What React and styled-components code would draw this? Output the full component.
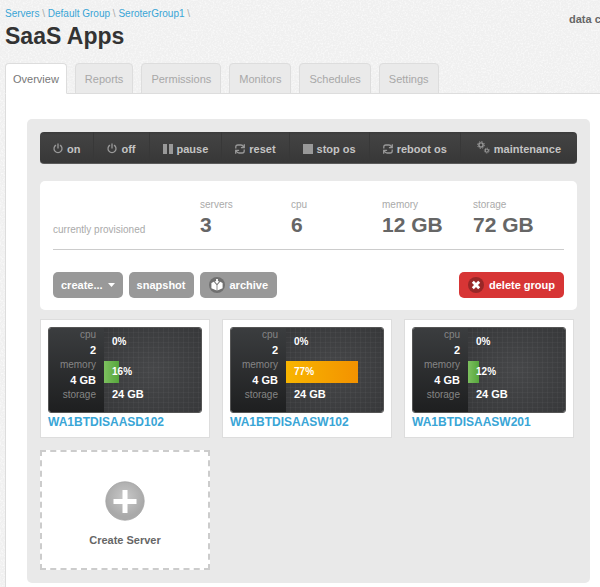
import React from "react";
import styled, { createGlobalStyle } from "styled-components";

const paper = encodeURIComponent(
  '<svg xmlns="http://www.w3.org/2000/svg" width="200" height="200"><filter id="n"><feTurbulence type="fractalNoise" baseFrequency="0.6" numOctaves="2" stitchTiles="stitch"/><feColorMatrix values="0 0 0 0 1  0 0 0 0 1  0 0 0 0 1  1.6 0 0 0 -0.7"/></filter><rect width="200" height="200" filter="url(#n)"/></svg>'
);

const GlobalStyle = createGlobalStyle`
  * { box-sizing: border-box; }
  body {
    margin: 0;
    color: #666;
    background: #f0f0f0 url("data:image/svg+xml,${paper}");
    font-family: "Liberation Sans", Arial, sans-serif;
    font-size: 11px;
  }
  button { font-family: inherit; cursor: pointer; }
  a { color: #39a5d6; text-decoration: none; }
  h1, h2, p, ul, dl, dd { margin: 0; padding: 0; }
`;

const Page = styled.div`
  display: flex;
  flex-direction: column;
  min-height: 100vh;
  padding-left: 5px;
  overflow-x: hidden;
`;

const Header = styled.header`
  display: flex;
  justify-content: space-between;
  align-items: flex-start;
  height: 63px;
  padding-top: 7px;
`;

const Breadcrumb = styled.nav`
  font-size: 10px;
  line-height: 14px;
  color: #aaa;
`;

const Title = styled.h1`
  margin-top: 2px;
  font-size: 23px;
  line-height: 26px;
  color: #333;
`;

const DataCenter = styled.p`
  width: 31px;
  margin-top: 5px;
  overflow: hidden;
  white-space: nowrap;
  font-weight: bold;
  font-size: 11px;
  line-height: 14px;
`;

const Tabs = styled.nav`
  display: flex;
  gap: 8px;
  border-bottom: 1px solid #ddd;
`;

const Tab = styled.a`
  height: 31px;
  margin-bottom: -1px;
  padding: 0 ${(p) => (p.$active ? "7px" : "9px")};
  border: 1px solid #ddd;
  border-bottom-color: ${(p) => (p.$active ? "#fff" : "#ddd")};
  border-radius: 4px 4px 0 0;
  background: ${(p) => (p.$active ? "#fff" : "#eaeaea")};
  color: ${(p) => (p.$active ? "#777" : "#a8a8a8")};
  font-size: 11px;
  line-height: 30px;
`;

const Content = styled.main`
  flex: 1;
  padding: 25px 10px 5px 21px;
  border-left: 1px solid #ddd;
  background: #fff;
`;

const Panel = styled.section`
  padding: 13px;
  border-radius: 5px;
  background: #e9e9e9;
`;

const Toolbar = styled.div`
  display: flex;
  height: 32px;
  border-radius: 4px;
  border-bottom: 1px solid #5a5a5a;
  overflow: hidden;
  background: linear-gradient(#3b3b3b, #434343 10%, #373737);
`;

const Tool = styled.button`
  display: flex;
  flex: 0 1 auto;
  align-items: center;
  justify-content: center;
  gap: 4px;
  padding: 2px 13px 0;
  border: 0;
  border-right: 1px solid #383838;
  background: none;
  color: #c4c4c4;
  font-size: 11px;
  font-weight: bold;
  white-space: nowrap;
  &:last-child { flex-grow: 1; border-right: 0; }
  svg { color: #999; }
`;

const Summary = styled.section`
  margin-top: 17px;
  padding: 17px 13px 12px;
  border-radius: 5px;
  background: #fff;
`;

const Stats = styled.div`
  display: grid;
  grid-template-columns: 147px repeat(4, 91px);
  align-items: end;
  padding-bottom: 12px;
  border-bottom: 1px solid #ccc;
`;

const StatLabel = styled.p`
  font-size: 10px;
  line-height: 14px;
  color: #aaa;
`;

const StatValue = styled.p`
  font-size: 21px;
  line-height: 25px;
  font-weight: bold;
  color: #666;
`;

const Actions = styled.div`
  display: flex;
  gap: 6px;
  margin-top: 22px;
`;

const Action = styled.button`
  display: flex;
  align-items: center;
  gap: 5px;
  height: 26px;
  margin-left: ${(p) => (p.$danger ? "auto" : "0")};
  padding: 0 ${(p) => (p.$icon ? "9px" : "8px")};
  border: 0;
  border-radius: 5px;
  background: ${(p) => (p.$danger ? "#d73535" : "#999")};
  color: #fff;
  font-size: 11px;
  font-weight: bold;
  white-space: nowrap;
`;

const Servers = styled.div`
  display: flex;
  flex-wrap: wrap;
  gap: 12px;
  margin-top: 9px;
`;

const Card = styled.article`
  width: 170px;
  height: 119px;
  padding: 7px;
  border: 1px solid #ddd;
  background: #fff;
`;

const Meter = styled.div`
  display: flex;
  height: 86px;
  border: 1px solid #555;
  border-radius: 3px;
  overflow: hidden;
  color: #fff;
`;

const Specs = styled.dl`
  width: 55px;
  padding: 0 8px;
  background: linear-gradient(#3b3d3f, #1e1f20);
  text-align: right;
  white-space: nowrap;
`;

const SpecName = styled.dt`
  font-size: 10px;
  line-height: 14px;
  color: #858585;
`;

const SpecValue = styled.dd`
  font-size: 11px;
  line-height: 16px;
  font-weight: bold;
`;

const Usage = styled.div`
  flex: 1;
  padding: 3px 4px 0 0;
  background:
    repeating-linear-gradient(90deg, transparent 0 4px, rgba(255, 255, 255, 0.03) 4px 5px),
    repeating-linear-gradient(transparent 0 4px, rgba(255, 255, 255, 0.03) 4px 5px),
    radial-gradient(#464749, #37383a);
`;

const UsageRow = styled.div`
  height: 22px;
  margin-bottom: ${(p) => (p.$spaced ? "8px" : "0")};
  font-size: ${(p) => (p.$plain ? "11px" : "10px")};
  font-weight: bold;
  line-height: 22px;
`;

const barColors = {
  green: "linear-gradient(90deg, #7dc05f, #56a63c)",
  orange: "linear-gradient(90deg, #f8b500, #f39200)",
};

const Bar = styled.div`
  height: 22px;
  background: ${(p) => barColors[p.$tone]};
`;

const BarText = styled.span`
  display: block;
  padding-left: 8px;
  white-space: nowrap;
`;

const ServerLink = styled.a`
  display: block;
  margin-top: 1px;
  font-size: 12px;
  line-height: 16px;
  font-weight: bold;
`;

const CreateCard = styled.button`
  display: flex;
  flex-direction: column;
  align-items: center;
  gap: 12px;
  width: 170px;
  height: 120px;
  padding: 29px 0 0;
  border: 2px dashed #ccc;
  background: #fff;
  color: #666;
  font-size: 11px;
  line-height: 14px;
  font-weight: bold;
`;

const PowerIcon = () => (
  <svg width="10" height="11" viewBox="0 0 10 11" fill="none" stroke="currentColor" strokeWidth="1.3">
    <path d="M3 2.1A4 4 0 1 0 7 2.1M5 0.5V5.5" />
  </svg>
);

const PauseIcon = () => (
  <svg width="10" height="10" viewBox="0 0 10 10" fill="currentColor">
    <path d="M0 0h4v10H0zM6 0h4v10H6z" />
  </svg>
);

const StopIcon = () => (
  <svg width="10" height="10" viewBox="0 0 10 10" fill="currentColor">
    <path d="M0 0h10v10H0z" />
  </svg>
);

const CycleIcon = () => (
  <svg width="10" height="10" viewBox="0 0 10 10" fill="none" stroke="currentColor" strokeWidth="1.3">
    <path d="M0.8 4.4V3Q0.8 1 2.8 1H6Q7.6 1 8.7 3M9.3 0.2V3.6H5.9M9.2 5.6V7Q9.2 9 7.2 9H4Q2.4 9 1.3 7M0.7 9.8V6.4H4.1" />
  </svg>
);

const GearsIcon = () => (
  <svg width="13" height="15" viewBox="0 0 13 15" fill="none" stroke="currentColor">
    <circle cx="4" cy="4" r="2.1" strokeWidth="1.4" />
    <circle cx="4" cy="4" r="3.4" strokeWidth="1" strokeDasharray="1.33 1.34" />
    <circle cx="9.8" cy="9.6" r="1.6" strokeWidth="1.1" />
    <circle cx="9.8" cy="9.6" r="2.5" strokeWidth="0.8" strokeDasharray="0.98 0.98" />
  </svg>
);

const CaretIcon = () => (
  <svg width="7" height="4" viewBox="0 0 7 4" fill="#fff">
    <path d="M0 0h7L3.5 4z" />
  </svg>
);

const ArchiveIcon = () => (
  <svg width="16" height="16" viewBox="0 0 16 16">
    <circle cx="8" cy="8" r="8" fill="#707070" />
    <path d="M2.4 6L4.8 4.8L7.6 8.1V13.6L2.4 11.3zM13.6 6L11.2 4.8L8.4 8.1V13.6L13.6 11.3z" fill="#fff" />
    <path d="M7.1 2h1.8v2.3h1.5L8 7L5.6 4.3h1.5z" fill="#fff" />
  </svg>
);

const DeleteIcon = () => (
  <svg width="16" height="16" viewBox="0 0 16 16">
    <circle cx="8" cy="8" r="8" fill="#982727" />
    <path d="M4.8 4.8L11.2 11.2M11.2 4.8L4.8 11.2" stroke="#fff" strokeWidth="2.8" />
  </svg>
);

const PlusIcon = () => (
  <svg width="40" height="40" viewBox="0 0 40 40">
    <defs>
      <radialGradient id="disc" cy="0.4">
        <stop offset="0" stopColor="#c8c8c8" />
        <stop offset="1" stopColor="#a9a9a9" />
      </radialGradient>
    </defs>
    <circle cx="20" cy="20" r="19.2" fill="url(#disc)" stroke="#a4a4a4" strokeWidth="0.8" />
    <path d="M20 9v23M8.5 20.5h23" stroke="#fff" strokeWidth="5" />
  </svg>
);

const crumbs = ["Servers", "Default Group", "SeroterGroup1"];
const tabs = ["Overview", "Reports", "Permissions", "Monitors", "Schedules", "Settings"];
const tools = [
  ["on", PowerIcon],
  ["off", PowerIcon],
  ["pause", PauseIcon],
  ["reset", CycleIcon],
  ["stop os", StopIcon],
  ["reboot os", CycleIcon],
  ["maintenance", GearsIcon],
];
const stats = [
  ["servers", "3"],
  ["cpu", "6"],
  ["memory", "12 GB"],
  ["storage", "72 GB"],
];
const servers = [
  { name: "WA1BTDISAASD102", memory: 16, tone: "green" },
  { name: "WA1BTDISAASW102", memory: 77, tone: "orange" },
  { name: "WA1BTDISAASW201", memory: 12, tone: "green" },
];

const ServerCard = ({ name, memory, tone }) => (
  <Card>
    <Meter>
      <Specs>
        <SpecName>cpu</SpecName>
        <SpecValue>2</SpecValue>
        <SpecName>memory</SpecName>
        <SpecValue>4 GB</SpecValue>
        <SpecName>storage</SpecName>
      </Specs>
      <Usage>
        <UsageRow $spaced><BarText>0%</BarText></UsageRow>
        <UsageRow>
          <Bar $tone={tone} style={{ width: `${memory}%` }}><BarText>{memory}%</BarText></Bar>
        </UsageRow>
        <UsageRow $plain><BarText>24 GB</BarText></UsageRow>
      </Usage>
    </Meter>
    <ServerLink href="#">{name}</ServerLink>
  </Card>
);

export default function App() {
  return (
    <>
      <GlobalStyle />
      <Page>
        <Header>
          <div>
            <Breadcrumb>
              {crumbs.map((c) => (
                <React.Fragment key={c}><a href="#">{c}</a>{" \\ "}</React.Fragment>
              ))}
            </Breadcrumb>
            <Title>SaaS Apps</Title>
          </div>
          <DataCenter>data center</DataCenter>
        </Header>
        <Tabs>
          {tabs.map((t, i) => <Tab key={t} href="#" $active={i === 0}>{t}</Tab>)}
        </Tabs>
        <Content>
          <Panel>
            <Toolbar>
              {tools.map(([label, Icon]) => (
                <Tool key={label}><Icon />{label}</Tool>
              ))}
            </Toolbar>
            <Summary>
              <Stats>
                <StatLabel>currently provisioned</StatLabel>
                {stats.map(([label, value]) => (
                  <div key={label}>
                    <StatLabel>{label}</StatLabel>
                    <StatValue>{value}</StatValue>
                  </div>
                ))}
              </Stats>
              <Actions>
                <Action>create... <CaretIcon /></Action>
                <Action>snapshot</Action>
                <Action $icon><ArchiveIcon />archive</Action>
                <Action $icon $danger><DeleteIcon />delete group</Action>
              </Actions>
            </Summary>
            <Servers>
              {servers.map((s) => <ServerCard key={s.name} {...s} />)}
              <CreateCard><PlusIcon />Create Server</CreateCard>
            </Servers>
          </Panel>
        </Content>
      </Page>
    </>
  );
}
